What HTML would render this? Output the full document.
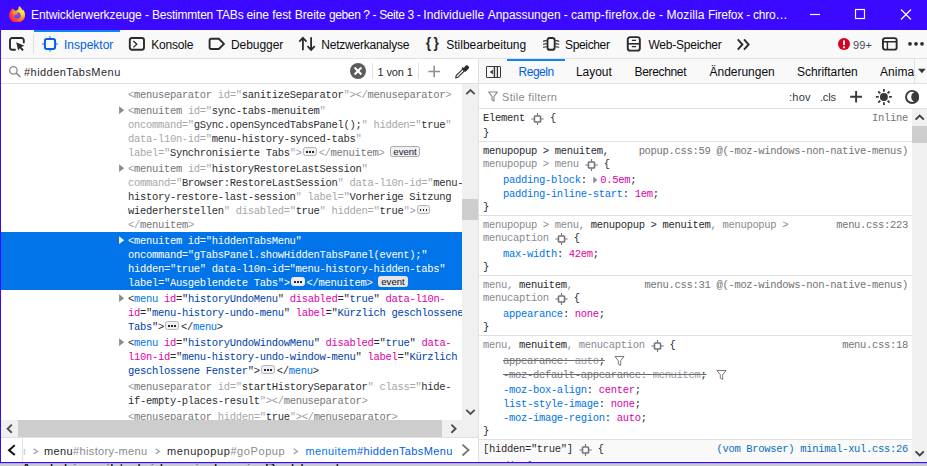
<!DOCTYPE html>
<html lang="de"><head><meta charset="utf-8"><title>Entwicklerwerkzeuge</title>
<style>
html,body{margin:0;padding:0}
body{width:927px;height:466px;overflow:hidden;background:#fff;position:relative}
#r{position:absolute;left:0;top:0;width:927px;height:466px;overflow:hidden}
#r div,#r svg{position:absolute}
#r .t{white-space:pre}
#r .s{font-family:"Liberation Sans", sans-serif}
#r .m{font-family:"Liberation Mono", monospace}
#r .t span{position:static}
#r .t span.bdg{display:inline-block;box-sizing:border-box;border:1px solid #b4b4b8;border-radius:2.500px;background:#f0f0f3;color:#1a1a2e;letter-spacing:0;overflow:hidden}
#r .t span.ell{position:relative;width:13.600px;height:9.500px;margin:0 2.100px 0 1.300px;vertical-align:-1.500px;top:-1.100px}
#r .t span.ell i{position:absolute;top:2.900px;width:1.800px;height:1.800px;background:#2a2a2e;display:block}
#r .t span.ev{font-family:"Liberation Sans", sans-serif;font-size:9.600px;line-height:9px;height:11px;padding:0 2.300px;margin-left:5.500px;vertical-align:-2px;position:relative;top:-1px;background:#f0f0f3;border-color:#a9a9ae}
#r .t span.tg{display:inline-block;position:relative;width:13px;height:12px;vertical-align:-3px;top:1px;margin:0}
#r .tg svg{left:0;top:0}
#r .t span.ex{display:inline-block;position:relative;width:7.500px;height:8px;vertical-align:-1px}
#r .ex svg{left:0;top:0}
#r .st{text-decoration:line-through;text-decoration-color:#6a6a6e}
#r .t span.fi{display:inline-block;position:relative;width:12px;height:12px;vertical-align:-3px;margin-left:9px}
#r .fi svg{left:0;top:0}
</style></head><body><div id="r">
<div style="left:0px;top:0px;width:927px;height:30px;background:#3b09ff;"></div>
<div style="left:0px;top:30px;width:1px;height:433px;background:#3b09ff;"></div>
<div class="t s" style="left:31px;top:8px;line-height:14px;height:14px;font-size:12px;color:#fff;letter-spacing:-0.108px;">Entwicklerwerkzeuge - </div>
<div class="t s" style="left:152px;top:8px;line-height:14px;height:14px;font-size:12px;color:#fff;letter-spacing:-0.234px;">Bestimmten TABs </div>
<div class="t s" style="left:246.5px;top:8px;line-height:14px;height:14px;font-size:12px;color:#fff;letter-spacing:-0.052px;">eine fest Breite </div>
<div class="t s" style="left:329px;top:8px;line-height:14px;height:14px;font-size:12px;color:#fff;letter-spacing:-0.391px;">geben ? - Seite 3 - </div>
<div class="t s" style="left:423.25px;top:8px;line-height:14px;height:14px;font-size:12px;color:#fff;letter-spacing:0.087px;">Individuelle </div>
<div class="t s" style="left:487.75px;top:8px;line-height:14px;height:14px;font-size:12px;color:#fff;letter-spacing:-0.058px;">Anpassungen - </div>
<div class="t s" style="left:571px;top:8px;line-height:14px;height:14px;font-size:12px;color:#fff;letter-spacing:0.118px;">camp-firefox.de - </div>
<div class="t s" style="left:666.5px;top:8px;line-height:14px;height:14px;font-size:12px;color:#fff;letter-spacing:0.102px;">Mozilla </div>
<div class="t s" style="left:708px;top:8px;line-height:14px;height:14px;font-size:12px;color:#fff;letter-spacing:-0.226px;">Firefox - chro…</div>
<svg style="left:805px;top:5px" width="120" height="20" viewBox="0 0 120 20"><g stroke="#fff" stroke-width="1.150" fill="none"><path d="M5 9.5H15"/><rect x="50.5" y="4.5" width="9" height="9"/><path d="M96 4.5L106 14.5M106 4.5L96 14.5"/></g></svg>
<svg style="left:8.900px;top:5.600px" width="16.200" height="16.800" viewBox="0 0 16.200 16.800"><defs><radialGradient id="fx" gradientUnits="userSpaceOnUse" cx="13.500" cy="4.500" r="15"><stop offset="0" stop-color="#fff44f"/><stop offset="0.280" stop-color="#ffd034"/><stop offset="0.550" stop-color="#ff8a1f"/><stop offset="0.800" stop-color="#ff3b3b"/><stop offset="1" stop-color="#f5156c"/></radialGradient><radialGradient id="fp" cx="0.350" cy="0.250" r="0.900"><stop offset="0" stop-color="#b455e0"/><stop offset="0.450" stop-color="#6a4af0"/><stop offset="1" stop-color="#3f55f5"/></radialGradient></defs><path d="M2.600 3.200C1.200 5 0 7 0 9.200C0 13.400 3.600 16.700 8.100 16.700C12.600 16.700 16.100 13.300 16.100 9C16.100 6.400 15 4.400 13.600 3.200C13.800 4 13.800 4.600 13.600 5C13 3 11.800 1.200 10.200 0.100C9.600 1.200 9.200 2.400 9.300 3.600C8.600 3.800 7.800 4.200 7.200 4.800C6.400 4.600 5.600 4.400 5 3.800C4.600 3.400 4.400 3 4.400 2.400C3.800 2.600 3.200 3 2.600 3.200Z" fill="url(#fx)"/><circle cx="8.300" cy="9.500" r="3.300" fill="url(#fp)"/><path d="M3 6.300C4.500 5.300 6.600 5 8.300 6C9.300 6.600 9.300 7.300 8.400 7.500C7 7.500 5.900 8.200 5.300 9.500C4.400 8.500 3.600 7.400 3 6.300Z" fill="#ff9420"/></svg>
<div style="left:1px;top:30px;width:926px;height:28px;background:#f9f9fa;"></div>
<div style="left:1px;top:58px;width:926px;height:1px;background:#e0e0e2;"></div>
<div style="left:34px;top:30px;width:86px;height:2px;background:#0a84ff;"></div>
<div style="left:33px;top:34px;width:1px;height:20px;background:#e0e0e2;"></div>
<svg style="left:8px;top:36px" width="18" height="16" viewBox="0 0 18 16"><path d="M7 13.800H4.200A2.200 2.200 0 0 1 2 11.600V4.200A2.200 2.200 0 0 1 4.200 2H13.600A2.200 2.200 0 0 1 15.800 4.200V6.600" fill="none" stroke="#2a2a2e" stroke-width="1.900" stroke-linecap="round"/><path d="M8.200 6.200L16.400 9.800L13.300 11L15.800 13.800L14.200 15L11.900 12.200L10.200 14.600Z" fill="#2a2a2e"/></svg>
<svg style="left:41px;top:35px" width="18" height="18" viewBox="0 0 18 18"><rect x="3.900" y="3.900" width="10.200" height="10.200" rx="2" fill="none" stroke="#0060df" stroke-width="2"/><path d="M9 1V3M9 15V16.800M0.900 9H3M15 9H16.900" stroke="#0060df" stroke-width="1.500" opacity="0.600"/></svg>
<div class="t s" style="left:64px;top:38px;line-height:14px;height:14px;font-size:12px;color:#0060df;letter-spacing:-0.007px;">Inspektor</div>
<svg style="left:128px;top:36px" width="18" height="16" viewBox="0 0 18 16"><rect x="1.8" y="2" width="14.2" height="11.7" rx="2.200" fill="none" stroke="#2a2a2e" stroke-width="1.900"/><path d="M5.400 5L8.800 8.200L5.400 11.400" fill="none" stroke="#2a2a2e" stroke-width="1.300"/></svg>
<div class="t s" style="left:151.3px;top:38px;line-height:14px;height:14px;font-size:12px;color:#0c0c0d;letter-spacing:-0.211px;">Konsole</div>
<svg style="left:208px;top:36px" width="18" height="16" viewBox="0 0 18 16"><path d="M3 2.8H10.8L16 7.9L10.8 13H3A1.4 1.4 0 0 1 1.6 11.6V4.2A1.4 1.4 0 0 1 3 2.8Z" fill="none" stroke="#2a2a2e" stroke-width="1.900" stroke-linejoin="round"/></svg>
<div class="t s" style="left:231px;top:38px;line-height:14px;height:14px;font-size:12px;color:#0c0c0d;letter-spacing:-0.065px;">Debugger</div>
<svg style="left:298px;top:36px" width="18" height="16" viewBox="0 0 18 16"><path d="M4.900 14.300V2.200M1.300 5.600L4.900 1.900L8.500 5.600M13.100 1.200V13.500M9.500 10.200L13.100 13.900L16.700 10.200" fill="none" stroke="#2a2a2e" stroke-width="1.800"/></svg>
<div class="t s" style="left:321.3px;top:38px;line-height:14px;height:14px;font-size:12px;color:#0c0c0d;letter-spacing:-0.232px;">Netzwerkanalyse</div>
<div class="t s" style="left:425.8px;top:35px;line-height:16px;height:16px;font-size:14px;color:#2a2a2e;letter-spacing:2.147px;font-weight:bold;">{}</div>
<div class="t s" style="left:446.3px;top:38px;line-height:14px;height:14px;font-size:12px;color:#0c0c0d;letter-spacing:-0.011px;">Stilbearbeitung</div>
<svg style="left:542px;top:36px" width="18" height="16" viewBox="0 0 18 16"><rect x="5.500" y="2" width="7.200" height="11.800" rx="2.400" fill="none" stroke="#2a2a2e" stroke-width="1.900"/><path d="M1 5.400L4.600 4.400M1 8.200L4.600 7.600M1 11.200L4.600 10.800M17.200 5.400L13.600 4.400M17.200 8.200L13.600 7.600M17.200 11.200L13.600 10.800" stroke="#2a2a2e" stroke-width="1.100"/></svg>
<div class="t s" style="left:565px;top:38px;line-height:14px;height:14px;font-size:12px;color:#0c0c0d;letter-spacing:-0.347px;">Speicher</div>
<svg style="left:625px;top:36px" width="18" height="16" viewBox="0 0 18 16"><rect x="2.750" y="1.150" width="12.100" height="13.500" rx="2.400" fill="none" stroke="#2a2a2e" stroke-width="1.900"/><path d="M2.800 7.800H14.800" stroke="#2a2a2e" stroke-width="1.600"/><path d="M6.900 4.400H11M6.900 10.700H11" stroke="#2a2a2e" stroke-width="1.300"/></svg>
<div class="t s" style="left:648.4px;top:38px;line-height:14px;height:14px;font-size:12px;color:#0c0c0d;letter-spacing:-0.219px;">Web-Speicher</div>
<svg style="left:736px;top:37px" width="16" height="14" viewBox="0 0 16 14"><path d="M1.800 2.400L6.400 7.500L1.800 12.600M8 2.400L12.600 7.500L8 12.600" fill="none" stroke="#2a2a2e" stroke-width="1.900"/></svg>
<svg style="left:837px;top:38px" width="14" height="14" viewBox="0 0 14 14"><circle cx="7" cy="6" r="6" fill="#d70022"/><rect x="6" y="2.300" width="2" height="4.900" rx="0.900" fill="#fff"/><circle cx="7" cy="9.300" r="1.150" fill="#fff"/></svg>
<div class="t s" style="left:853px;top:39px;line-height:12px;height:12px;font-size:11px;color:#4a4a4f;letter-spacing:0.109px;">99+</div>
<svg style="left:881px;top:36px" width="18" height="16" viewBox="0 0 18 16"><rect x="1.950" y="2.150" width="13.700" height="11.500" rx="2.200" fill="none" stroke="#2a2a2e" stroke-width="1.900"/><path d="M2 5.800H15.600M6.400 5.800V13.600" stroke="#2a2a2e" stroke-width="1.400"/></svg>
<svg style="left:906px;top:40px" width="18" height="8" viewBox="0 0 18 8"><circle cx="4" cy="3.800" r="1.850" fill="#2a2a2e"/><circle cx="10" cy="3.800" r="1.850" fill="#2a2a2e"/><circle cx="16" cy="3.800" r="1.850" fill="#2a2a2e"/></svg>
<div style="left:1px;top:83px;width:478px;height:1px;background:#e0e0e2;"></div>
<svg style="left:8px;top:65px" width="14" height="13" viewBox="0 0 14 13"><circle cx="5.400" cy="5.400" r="3.700" fill="none" stroke="#8a8a8f" stroke-width="1.300"/><path d="M8.200 8.200L12.400 12" stroke="#8a8a8f" stroke-width="1.600"/></svg>
<div class="t s" style="left:24px;top:66px;line-height:12px;height:12px;font-size:11px;color:#2a2a2e;letter-spacing:0.453px;">#hiddenTabsMenu</div>
<svg style="left:350px;top:63px" width="16" height="16" viewBox="0 0 16 16"><circle cx="8" cy="8" r="8" fill="#5c5c5c"/><path d="M4.600 4.600L11.400 11.400M11.400 4.600L4.600 11.400" stroke="#fff" stroke-width="2.100"/></svg>
<div style="left:372px;top:63px;width:1px;height:16px;background:#e0e0e2;"></div>
<div class="t s" style="left:377.5px;top:66px;line-height:12px;height:12px;font-size:11px;color:#2a2a2e;letter-spacing:-0.113px;">1 von 1</div>
<div style="left:418px;top:63px;width:1px;height:16px;background:#e0e0e2;"></div>
<svg style="left:427px;top:65px" width="14" height="13" viewBox="0 0 14 13"><path d="M7.200 0.700V12.300M1.400 6.500H13" stroke="#8f8f94" stroke-width="1.600"/></svg>
<svg style="left:453px;top:63.800px" width="18" height="16" viewBox="0 0 18 16"><path d="M2.800 13.700L3.200 11.600L9.600 5.200L11.300 6.900L4.900 13.300Z" fill="none" stroke="#2a2a2e" stroke-width="1.100"/><path d="M9.200 3.600L12.900 7.300M10.800 5.200L13 2.600A1.200 1.200 0 0 1 14.800 4.400L12.400 6.600" stroke="#2a2a2e" stroke-width="1.700" fill="#2a2a2e"/></svg>
<div style="left:478px;top:59px;width:1px;height:404px;background:#e0e0e2;"></div>
<div class="t m" style="left:128px;top:89px;line-height:12px;height:12px;font-size:10.5px;color:#76767b;letter-spacing:-0.315px;"><span style="color:#9a9a9f">&lt;</span><span style="color:#76767b">menuseparator </span><span style="color:#a6a6aa">id="</span><span style="color:#2e2e33">sanitizeSeparator</span><span style="color:#a6a6aa">"</span><span style="color:#9a9a9f">&gt;&lt;/</span><span style="color:#76767b">menuseparator</span><span style="color:#9a9a9f">&gt;</span></div>
<svg style="left:118px;top:105.5px" width="8" height="10" viewBox="0 0 8 10"><path d="M1.100 0.300L6.100 4.200L1.100 8.100Z" fill="#8a8a8f"/></svg>
<div class="t m" style="left:128px;top:105px;line-height:12px;height:12px;font-size:10.5px;color:#76767b;letter-spacing:-0.315px;"><span style="color:#9a9a9f">&lt;</span><span style="color:#76767b">menuitem </span><span style="color:#a6a6aa">id="</span><span style="color:#2e2e33">sync-tabs-menuitem</span><span style="color:#a6a6aa">"</span></div>
<div class="t m" style="left:128px;top:119px;line-height:12px;height:12px;font-size:10.5px;color:#76767b;letter-spacing:-0.315px;"><span style="color:#a6a6aa">oncommand="</span><span style="color:#2e2e33">gSync.openSyncedTabsPanel();</span><span style="color:#a6a6aa">" hidden="</span><span style="color:#2e2e33">true</span><span style="color:#a6a6aa">"</span></div>
<div class="t m" style="left:128px;top:133px;line-height:12px;height:12px;font-size:10.5px;color:#76767b;letter-spacing:-0.315px;"><span style="color:#a6a6aa">data-l10n-id="</span><span style="color:#2e2e33">menu-history-synced-tabs</span><span style="color:#a6a6aa">"</span></div>
<div class="t m" style="left:128px;top:147px;line-height:12px;height:12px;font-size:10.5px;color:#76767b;letter-spacing:-0.315px;"><span style="color:#a6a6aa">label="</span><span style="color:#2e2e33">Synchronisierte Tabs</span><span style="color:#a6a6aa">"</span><span style="color:#9a9a9f">&gt;</span><span class="bdg ell"><i style="left:1.900px"></i><i style="left:4.850px"></i><i style="left:7.800px"></i></span><span style="color:#9a9a9f">&lt;/</span><span style="color:#76767b">menuitem</span><span style="color:#9a9a9f">&gt;</span><span class="bdg ev">event</span></div>
<svg style="left:118px;top:163.5px" width="8" height="10" viewBox="0 0 8 10"><path d="M1.100 0.300L6.100 4.200L1.100 8.100Z" fill="#8a8a8f"/></svg>
<div class="t m" style="left:128px;top:163px;line-height:12px;height:12px;font-size:10.5px;color:#76767b;letter-spacing:-0.315px;"><span style="color:#9a9a9f">&lt;</span><span style="color:#76767b">menuitem </span><span style="color:#a6a6aa">id="</span><span style="color:#2e2e33">historyRestoreLastSession</span><span style="color:#a6a6aa">"</span></div>
<div class="t m" style="left:128px;top:177px;line-height:12px;height:12px;font-size:10.5px;color:#76767b;letter-spacing:-0.315px;"><span style="color:#a6a6aa">command="</span><span style="color:#2e2e33">Browser:RestoreLastSession</span><span style="color:#a6a6aa">" data-l10n-id="</span><span style="color:#2e2e33">menu-</span></div>
<div class="t m" style="left:128px;top:191px;line-height:12px;height:12px;font-size:10.5px;color:#76767b;letter-spacing:-0.315px;"><span style="color:#2e2e33">history-restore-last-session</span><span style="color:#a6a6aa">" label="</span><span style="color:#2e2e33">Vorherige Sitzung</span></div>
<div class="t m" style="left:128px;top:205px;line-height:12px;height:12px;font-size:10.5px;color:#76767b;letter-spacing:-0.315px;"><span style="color:#2e2e33">wiederherstellen</span><span style="color:#a6a6aa">" disabled="</span><span style="color:#2e2e33">true</span><span style="color:#a6a6aa">" hidden="</span><span style="color:#2e2e33">true</span><span style="color:#a6a6aa">"</span><span style="color:#9a9a9f">&gt;</span><span class="bdg ell"><i style="left:1.900px"></i><i style="left:4.850px"></i><i style="left:7.800px"></i></span></div>
<div class="t m" style="left:128px;top:219px;line-height:12px;height:12px;font-size:10.5px;color:#76767b;letter-spacing:-0.315px;"><span style="color:#9a9a9f">&lt;/</span><span style="color:#76767b">menuitem</span><span style="color:#9a9a9f">&gt;</span></div>
<div style="left:1px;top:232px;width:461px;height:58px;background:#0074e8;"></div>
<svg style="left:118px;top:235.5px" width="8" height="10" viewBox="0 0 8 10"><path d="M1.100 0.300L6.100 4.200L1.100 8.100Z" fill="#fff"/></svg>
<div class="t m" style="left:128px;top:235px;line-height:12px;height:12px;font-size:10.5px;color:#fff;letter-spacing:-0.315px;"><span style="color:#fff">&lt;menuitem id="hiddenTabsMenu"</span></div>
<div class="t m" style="left:128px;top:249px;line-height:12px;height:12px;font-size:10.5px;color:#fff;letter-spacing:-0.315px;"><span style="color:#fff">oncommand="gTabsPanel.showHiddenTabsPanel(event);"</span></div>
<div class="t m" style="left:128px;top:263px;line-height:12px;height:12px;font-size:10.5px;color:#fff;letter-spacing:-0.315px;"><span style="color:#fff">hidden="true" data-l10n-id="menu-history-hidden-tabs"</span></div>
<div class="t m" style="left:128px;top:277px;line-height:12px;height:12px;font-size:10.5px;color:#fff;letter-spacing:-0.315px;"><span style="color:#fff">label="Ausgeblendete Tabs"&gt;</span><span class="bdg ell" style="background:#ededf0;border-color:#ededf0"><i style="left:1.900px"></i><i style="left:4.850px"></i><i style="left:7.800px"></i></span><span style="color:#fff">&lt;/menuitem&gt;</span><span class="bdg ev" style="background:#e6e6ea;border-color:#e6e6ea;color:#0c0c0d">event</span></div>
<svg style="left:118px;top:293.5px" width="8" height="10" viewBox="0 0 8 10"><path d="M1.100 0.300L6.100 4.200L1.100 8.100Z" fill="#8a8a8f"/></svg>
<div class="t m" style="left:128px;top:293px;line-height:12px;height:12px;font-size:10.5px;color:#76767b;letter-spacing:-0.315px;"><span style="color:#2a2a2e">&lt;</span><span style="color:#0074e8">menu </span><span style="color:#dd00a9">id</span><span style="color:#2a2a2e">="</span><span style="color:#003eaa">historyUndoMenu</span><span style="color:#2a2a2e">" </span><span style="color:#dd00a9">disabled</span><span style="color:#2a2a2e">="</span><span style="color:#003eaa">true</span><span style="color:#2a2a2e">" </span><span style="color:#dd00a9">data-l10n-</span></div>
<div class="t m" style="left:128px;top:307px;line-height:12px;height:12px;font-size:10.5px;color:#76767b;letter-spacing:-0.315px;"><span style="color:#dd00a9">id</span><span style="color:#2a2a2e">="</span><span style="color:#003eaa">menu-history-undo-menu</span><span style="color:#2a2a2e">" </span><span style="color:#dd00a9">label</span><span style="color:#2a2a2e">="</span><span style="color:#003eaa">Kürzlich geschlossene</span></div>
<div class="t m" style="left:128px;top:321px;line-height:12px;height:12px;font-size:10.5px;color:#76767b;letter-spacing:-0.315px;"><span style="color:#003eaa">Tabs</span><span style="color:#2a2a2e">"&gt;</span><span class="bdg ell"><i style="left:1.900px"></i><i style="left:4.850px"></i><i style="left:7.800px"></i></span><span style="color:#2a2a2e">&lt;/</span><span style="color:#0074e8">menu</span><span style="color:#2a2a2e">&gt;</span></div>
<svg style="left:118px;top:337.5px" width="8" height="10" viewBox="0 0 8 10"><path d="M1.100 0.300L6.100 4.200L1.100 8.100Z" fill="#8a8a8f"/></svg>
<div class="t m" style="left:128px;top:337px;line-height:12px;height:12px;font-size:10.5px;color:#76767b;letter-spacing:-0.315px;"><span style="color:#2a2a2e">&lt;</span><span style="color:#0074e8">menu </span><span style="color:#dd00a9">id</span><span style="color:#2a2a2e">="</span><span style="color:#003eaa">historyUndoWindowMenu</span><span style="color:#2a2a2e">" </span><span style="color:#dd00a9">disabled</span><span style="color:#2a2a2e">="</span><span style="color:#003eaa">true</span><span style="color:#2a2a2e">" </span><span style="color:#dd00a9">data-</span></div>
<div class="t m" style="left:128px;top:351px;line-height:12px;height:12px;font-size:10.5px;color:#76767b;letter-spacing:-0.315px;"><span style="color:#dd00a9">l10n-id</span><span style="color:#2a2a2e">="</span><span style="color:#003eaa">menu-history-undo-window-menu</span><span style="color:#2a2a2e">" </span><span style="color:#dd00a9">label</span><span style="color:#2a2a2e">="</span><span style="color:#003eaa">Kürzlich</span></div>
<div class="t m" style="left:128px;top:365px;line-height:12px;height:12px;font-size:10.5px;color:#76767b;letter-spacing:-0.315px;"><span style="color:#003eaa">geschlossene Fenster</span><span style="color:#2a2a2e">"&gt;</span><span class="bdg ell"><i style="left:1.900px"></i><i style="left:4.850px"></i><i style="left:7.800px"></i></span><span style="color:#2a2a2e">&lt;/</span><span style="color:#0074e8">menu</span><span style="color:#2a2a2e">&gt;</span></div>
<div class="t m" style="left:128px;top:381px;line-height:12px;height:12px;font-size:10.5px;color:#76767b;letter-spacing:-0.315px;"><span style="color:#9a9a9f">&lt;</span><span style="color:#76767b">menuseparator </span><span style="color:#a6a6aa">id="</span><span style="color:#2e2e33">startHistorySeparator</span><span style="color:#a6a6aa">" class="</span><span style="color:#2e2e33">hide-</span></div>
<div class="t m" style="left:128px;top:395px;line-height:12px;height:12px;font-size:10.5px;color:#76767b;letter-spacing:-0.315px;"><span style="color:#2e2e33">if-empty-places-result</span><span style="color:#a6a6aa">"</span><span style="color:#9a9a9f">&gt;&lt;/</span><span style="color:#76767b">menuseparator</span><span style="color:#9a9a9f">&gt;</span></div>
<div class="t m" style="left:128px;top:411px;line-height:12px;height:12px;font-size:10.5px;color:#76767b;letter-spacing:-0.315px;"><span style="color:#9a9a9f">&lt;</span><span style="color:#76767b">menuseparator </span><span style="color:#a6a6aa">hidden="</span><span style="color:#2e2e33">true</span><span style="color:#a6a6aa">"</span><span style="color:#9a9a9f">&gt;&lt;/</span><span style="color:#76767b">menuseparator</span><span style="color:#9a9a9f">&gt;</span></div>
<div style="left:462px;top:84px;width:16px;height:353px;background:#f0f0f0;"></div>
<div style="left:462px;top:199px;width:16px;height:20.5px;background:#cdcdcd;"></div>
<svg style="left:462px;top:84px" width="16" height="17" viewBox="0 0 16 17"><path d="M4.300 10.200L8.500 6L12.700 10.200" fill="none" stroke="#505050" stroke-width="1.900"/></svg>
<svg style="left:462px;top:403px" width="16" height="17" viewBox="0 0 16 17"><path d="M4.300 6.800L8.500 11L12.700 6.800" fill="none" stroke="#505050" stroke-width="1.900"/></svg>
<div style="left:1px;top:420px;width:461px;height:17px;background:#f0f0f0;"></div>
<div style="left:18px;top:420px;width:424px;height:17px;background:#cdcdcd;"></div>
<svg style="left:1px;top:420px" width="17" height="17" viewBox="0 0 17 17"><path d="M10.800 4.600L6.600 8.700L10.800 12.800" fill="none" stroke="#505050" stroke-width="1.900"/></svg>
<svg style="left:444px;top:420px" width="17" height="17" viewBox="0 0 17 17"><path d="M7.400 4.600L11.600 8.700L7.400 12.800" fill="none" stroke="#505050" stroke-width="1.900"/></svg>
<div style="left:1px;top:437px;width:477px;height:25px;background:#fff;"></div>
<div style="left:1px;top:437px;width:477px;height:1px;background:#e0e0e2;"></div>
<svg style="left:6px;top:443px" width="12" height="14" viewBox="0 0 12 14"><path d="M8.800 2.300L3 7.200L8.800 12.100" fill="none" stroke="#0c0c0d" stroke-width="1.900"/></svg>
<div style="left:22px;top:438px;width:1px;height:24px;background:#e0e0e2;"></div>
<div class="t s" style="left:23px;top:445px;line-height:12px;height:12px;font-size:11px;color:#b4c8ec;clip-path:inset(0 1px 0 0);">r</div>
<svg style="left:32.5px;top:447.500px" width="6" height="7" viewBox="0 0 6 7"><path d="M0.700 0.800L4.400 3.400L0.700 6" fill="none" stroke="#a2a2bc" stroke-width="1.300"/></svg>
<div class="t s" style="left:44px;top:445px;line-height:12px;height:12px;font-size:11px;color:#2a2a2e;letter-spacing:0.369px;">menu<span style="color:#8a8a8f">#history-menu</span></div>
<svg style="left:154.5px;top:447.500px" width="6" height="7" viewBox="0 0 6 7"><path d="M0.700 0.800L4.400 3.400L0.700 6" fill="none" stroke="#a2a2bc" stroke-width="1.300"/></svg>
<div class="t s" style="left:167px;top:445px;line-height:12px;height:12px;font-size:11px;color:#2a2a2e;letter-spacing:0.589px;">menupopup<span style="color:#8a8a8f">#goPopup</span></div>
<svg style="left:292.5px;top:447.500px" width="6" height="7" viewBox="0 0 6 7"><path d="M0.700 0.800L4.400 3.400L0.700 6" fill="none" stroke="#a2a2bc" stroke-width="1.300"/></svg>
<div class="t s" style="left:305.5px;top:445px;line-height:12px;height:12px;font-size:11px;color:#0074e8;letter-spacing:0.396px;">menuitem<span style="color:#0060df">#hiddenTabsMenu</span></div>
<svg style="left:459px;top:443px" width="12" height="14" viewBox="0 0 12 14"><path d="M3.500 1.700L9.500 7.100L3.500 12.500" fill="none" stroke="#737373" stroke-width="1.800"/></svg>
<div style="left:479px;top:59px;width:448px;height:24px;background:#f9f9fa;"></div>
<div style="left:479px;top:83px;width:448px;height:1px;background:#e0e0e2;"></div>
<div style="left:507px;top:59px;width:57.5px;height:2px;background:#0a84ff;"></div>
<svg style="left:485px;top:65px" width="18" height="14" viewBox="0 0 18 14"><rect x="1.500" y="1.500" width="14" height="11" rx="0.500" fill="none" stroke="#38383d" stroke-width="1"/><path d="M9.400 1.500V12.500" stroke="#38383d" stroke-width="1.500"/><path d="M12.400 1.500V12.500" stroke="#38383d" stroke-width="1.300"/><path d="M7.900 4.800L4.700 7L7.900 9.200Z" fill="#38383d"/></svg>
<div class="t s" style="left:518.5px;top:65px;line-height:14px;height:14px;font-size:12px;color:#0060df;letter-spacing:-0.472px;">Regeln</div>
<div class="t s" style="left:576px;top:65px;line-height:14px;height:14px;font-size:12px;color:#0c0c0d;letter-spacing:-0.055px;">Layout</div>
<div class="t s" style="left:634.5px;top:65px;line-height:14px;height:14px;font-size:12px;color:#0c0c0d;letter-spacing:-0.334px;">Berechnet</div>
<div class="t s" style="left:709.5px;top:65px;line-height:14px;height:14px;font-size:12px;color:#0c0c0d;letter-spacing:-0.019px;">Änderungen</div>
<div class="t s" style="left:797px;top:65px;line-height:14px;height:14px;font-size:12px;color:#0c0c0d;letter-spacing:-0.055px;">Schriftarten</div>
<div class="t s" style="left:880px;top:65px;line-height:14px;height:14px;font-size:12px;color:#0c0c0d;letter-spacing:0.057px;">Anima</div>
<div style="left:914px;top:59px;width:13px;height:24px;background:#f9f9fa;"></div>
<div style="left:914px;top:59px;width:1px;height:24px;background:#e0e0e2;"></div>
<svg style="left:917px;top:68px" width="10" height="6" viewBox="0 0 10 6"><path d="M1 0.800H8.800L4.900 5.200Z" fill="#38383d"/></svg>
<div style="left:479px;top:108px;width:448px;height:1px;background:#e0e0e2;"></div>
<svg style="left:487px;top:90px" width="12" height="13" viewBox="0 0 12 13"><path d="M1.600 2H10.400L7 6.400V11L5 9.800V6.400Z" fill="none" stroke="#8a8a8f" stroke-width="1.150" stroke-linejoin="round"/></svg>
<div class="t s" style="left:502px;top:91px;line-height:12px;height:12px;font-size:11px;color:#8a8a8f;letter-spacing:0.303px;">Stile filtern</div>
<div class="t s" style="left:789px;top:91px;line-height:12px;height:12px;font-size:11px;color:#38383d;letter-spacing:0.226px;">:hov</div>
<div class="t s" style="left:820px;top:91px;line-height:12px;height:12px;font-size:11px;color:#38383d;letter-spacing:-0.200px;">.cls</div>
<svg style="left:850px;top:90px" width="13" height="13" viewBox="0 0 13 13"><path d="M6.100 1V12.600M0.200 6.800H12" stroke="#38383d" stroke-width="1.900"/></svg>
<svg style="left:875px;top:88px" width="18" height="18" viewBox="0 0 18 18"><circle cx="8.9" cy="8.95" r="3.950" fill="#38383d"/><path d="M14.10 8.95L16.90 8.95M12.58 12.63L14.56 14.61M8.90 14.15L8.90 16.95M5.22 12.63L3.24 14.61M3.70 8.95L0.90 8.95M5.22 5.27L3.24 3.29M8.90 3.75L8.90 0.95M12.58 5.27L14.56 3.29" stroke="#38383d" stroke-width="1.800"/></svg>
<svg style="left:904px;top:89px" width="16" height="16" viewBox="0 0 16 16"><defs><clipPath id="cc"><circle cx="8.100" cy="7.950" r="6.900"/></clipPath></defs><circle cx="8.100" cy="7.950" r="6.050" fill="none" stroke="#38383d" stroke-width="1.900"/><circle cx="12.700" cy="7.950" r="5.500" fill="#38383d" clip-path="url(#cc)"/></svg>
<div style="left:912px;top:109px;width:15px;height:354px;background:#f0f0f0;"></div>
<div style="left:912px;top:126px;width:15px;height:16.5px;background:#cdcdcd;"></div>
<svg style="left:912px;top:109px" width="15" height="17" viewBox="0 0 15 17"><path d="M3.600 10.700L7.700 6.600L11.800 10.700" fill="none" stroke="#404040" stroke-width="1.900"/></svg>
<svg style="left:912px;top:445px" width="15" height="17" viewBox="0 0 15 17"><path d="M3.600 6.400L7.700 10.500L11.800 6.400" fill="none" stroke="#404040" stroke-width="1.900"/></svg>
<div class="t m" style="left:483px;top:112px;line-height:12px;height:12px;font-size:10.5px;color:#2a2a2e;letter-spacing:-0.315px;"><span style="color:#2a2a2e">Element </span><span class="tg"><svg width="13" height="12" viewBox="0 0 13 12"><rect x="3.450" y="2.950" width="6.100" height="6.100" rx="0.800" fill="none" stroke="#737378" stroke-width="1.600"/><path d="M6.500 0V2.400M6.500 9.600V12M0.300 6H2.800M10.200 6H12.700" stroke="#737378" stroke-width="1.150"/></svg></span><span style="color:#2a2a2e"> {</span></div>
<div class="t m" style="left:479px;top:112px;line-height:12px;height:12px;font-size:10.5px;color:#737373;letter-spacing:-0.315px;width:429px;text-align:right;">Inline</div>
<div class="t m" style="left:483px;top:127px;line-height:12px;height:12px;font-size:10.5px;color:#2a2a2e;letter-spacing:-0.315px;"><span style="color:#2a2a2e">}</span></div>
<div style="left:479px;top:141px;width:433px;height:1px;background:#e0e0e2;"></div>
<div class="t m" style="left:483px;top:145px;line-height:12px;height:12px;font-size:10.5px;color:#2a2a2e;letter-spacing:-0.315px;"><span style="color:#2a2a2e">menupopup &gt; menuitem,</span></div>
<div class="t m" style="left:479px;top:145px;line-height:12px;height:12px;font-size:10.5px;color:#737373;letter-spacing:-0.315px;width:429px;text-align:right;">popup.css:59 @(-moz-windows-non-native-menus)</div>
<div class="t m" style="left:483px;top:158px;line-height:12px;height:12px;font-size:10.5px;color:#2a2a2e;letter-spacing:-0.315px;"><span style="color:#8a8a8f">menupopup &gt; menu </span><span class="tg"><svg width="13" height="12" viewBox="0 0 13 12"><rect x="3.450" y="2.950" width="6.100" height="6.100" rx="0.800" fill="none" stroke="#737378" stroke-width="1.600"/><path d="M6.500 0V2.400M6.500 9.600V12M0.300 6H2.800M10.200 6H12.700" stroke="#737378" stroke-width="1.150"/></svg></span><span style="color:#2a2a2e"> {</span></div>
<div class="t m" style="left:503px;top:174px;line-height:12px;height:12px;font-size:10.5px;color:#2a2a2e;letter-spacing:-0.315px;"><span style="color:#0074e8">padding-block</span><span style="color:#2a2a2e">: </span><span class="ex"><svg width="5" height="8" viewBox="0 0 5 8"><path d="M0.300 0.500L4.300 4L0.300 7.500Z" fill="#8a8a8f"/></svg></span><span style="color:#dd00a9">0.5em</span><span style="color:#2a2a2e">;</span></div>
<div class="t m" style="left:503px;top:188px;line-height:12px;height:12px;font-size:10.5px;color:#2a2a2e;letter-spacing:-0.315px;"><span style="color:#0074e8">padding-inline-start</span><span style="color:#2a2a2e">: </span><span style="color:#dd00a9">1em</span><span style="color:#2a2a2e">;</span></div>
<div class="t m" style="left:483px;top:201px;line-height:12px;height:12px;font-size:10.5px;color:#2a2a2e;letter-spacing:-0.315px;"><span style="color:#2a2a2e">}</span></div>
<div style="left:479px;top:215px;width:433px;height:1px;background:#e0e0e2;"></div>
<div class="t m" style="left:483px;top:219px;line-height:12px;height:12px;font-size:10.5px;color:#2a2a2e;letter-spacing:-0.315px;"><span style="color:#8a8a8f">menupopup &gt; menu, </span><span style="color:#2a2a2e">menupopup &gt; menuitem</span><span style="color:#8a8a8f">, menupopup &gt;</span></div>
<div class="t m" style="left:479px;top:219px;line-height:12px;height:12px;font-size:10.5px;color:#737373;letter-spacing:-0.315px;width:429px;text-align:right;">menu.css:223</div>
<div class="t m" style="left:483px;top:232px;line-height:12px;height:12px;font-size:10.5px;color:#2a2a2e;letter-spacing:-0.315px;"><span style="color:#8a8a8f">menucaption </span><span class="tg"><svg width="13" height="12" viewBox="0 0 13 12"><rect x="3.450" y="2.950" width="6.100" height="6.100" rx="0.800" fill="none" stroke="#737378" stroke-width="1.600"/><path d="M6.500 0V2.400M6.500 9.600V12M0.300 6H2.800M10.200 6H12.700" stroke="#737378" stroke-width="1.150"/></svg></span><span style="color:#2a2a2e"> {</span></div>
<div class="t m" style="left:503px;top:248px;line-height:12px;height:12px;font-size:10.5px;color:#2a2a2e;letter-spacing:-0.315px;"><span style="color:#0074e8">max-width</span><span style="color:#2a2a2e">: </span><span style="color:#dd00a9">42em</span><span style="color:#2a2a2e">;</span></div>
<div class="t m" style="left:483px;top:261px;line-height:12px;height:12px;font-size:10.5px;color:#2a2a2e;letter-spacing:-0.315px;"><span style="color:#2a2a2e">}</span></div>
<div style="left:479px;top:275px;width:433px;height:1px;background:#e0e0e2;"></div>
<div class="t m" style="left:483px;top:279px;line-height:12px;height:12px;font-size:10.5px;color:#2a2a2e;letter-spacing:-0.315px;"><span style="color:#8a8a8f">menu, </span><span style="color:#2a2a2e">menuitem</span><span style="color:#8a8a8f">,</span></div>
<div class="t m" style="left:479px;top:279px;line-height:12px;height:12px;font-size:10.5px;color:#737373;letter-spacing:-0.315px;width:429px;text-align:right;">menu.css:31 @(-moz-windows-non-native-menus)</div>
<div class="t m" style="left:483px;top:292px;line-height:12px;height:12px;font-size:10.5px;color:#2a2a2e;letter-spacing:-0.315px;"><span style="color:#8a8a8f">menucaption </span><span class="tg"><svg width="13" height="12" viewBox="0 0 13 12"><rect x="3.450" y="2.950" width="6.100" height="6.100" rx="0.800" fill="none" stroke="#737378" stroke-width="1.600"/><path d="M6.500 0V2.400M6.500 9.600V12M0.300 6H2.800M10.200 6H12.700" stroke="#737378" stroke-width="1.150"/></svg></span><span style="color:#2a2a2e"> {</span></div>
<div class="t m" style="left:503px;top:308px;line-height:12px;height:12px;font-size:10.5px;color:#2a2a2e;letter-spacing:-0.315px;"><span style="color:#0074e8">appearance</span><span style="color:#2a2a2e">: </span><span style="color:#dd00a9">none</span><span style="color:#2a2a2e">;</span></div>
<div class="t m" style="left:483px;top:321px;line-height:12px;height:12px;font-size:10.5px;color:#2a2a2e;letter-spacing:-0.315px;"><span style="color:#2a2a2e">}</span></div>
<div style="left:479px;top:335px;width:433px;height:1px;background:#e0e0e2;"></div>
<div class="t m" style="left:483px;top:339px;line-height:12px;height:12px;font-size:10.5px;color:#2a2a2e;letter-spacing:-0.315px;"><span style="color:#8a8a8f">menu, </span><span style="color:#2a2a2e">menuitem</span><span style="color:#8a8a8f">, menucaption </span><span class="tg"><svg width="13" height="12" viewBox="0 0 13 12"><rect x="3.450" y="2.950" width="6.100" height="6.100" rx="0.800" fill="none" stroke="#737378" stroke-width="1.600"/><path d="M6.500 0V2.400M6.500 9.600V12M0.300 6H2.800M10.200 6H12.700" stroke="#737378" stroke-width="1.150"/></svg></span><span style="color:#2a2a2e"> {</span></div>
<div class="t m" style="left:479px;top:339px;line-height:12px;height:12px;font-size:10.5px;color:#737373;letter-spacing:-0.315px;width:429px;text-align:right;">menu.css:18</div>
<div class="t m" style="left:503px;top:355px;line-height:12px;height:12px;font-size:10.5px;color:#737373;letter-spacing:-0.315px;"><span class="st"><span style="color:#7c7c81">appearance: </span><span style="color:#9c9ca1">auto</span><span style="color:#2a2a2e">;</span></span><span class="fi"><svg width="12" height="12" viewBox="0 0 12 12"><path d="M1 1.500H10L6.700 5.700V10.500L4.300 9.200V5.700Z" fill="none" stroke="#6a6a6e" stroke-width="0.900"/></svg></span></div>
<div class="t m" style="left:503px;top:369px;line-height:12px;height:12px;font-size:10.5px;color:#737373;letter-spacing:-0.315px;"><span class="st"><span style="color:#7c7c81">-moz-default-appearance: </span><span style="color:#9c9ca1">menuitem</span><span style="color:#2a2a2e">;</span></span><span class="fi"><svg width="12" height="12" viewBox="0 0 12 12"><path d="M1 1.500H10L6.700 5.700V10.500L4.300 9.200V5.700Z" fill="none" stroke="#6a6a6e" stroke-width="0.900"/></svg></span></div>
<div class="t m" style="left:503px;top:384px;line-height:12px;height:12px;font-size:10.5px;color:#2a2a2e;letter-spacing:-0.315px;"><span style="color:#0074e8">-moz-box-align</span><span style="color:#2a2a2e">: </span><span style="color:#dd00a9">center</span><span style="color:#2a2a2e">;</span></div>
<div class="t m" style="left:503px;top:398px;line-height:12px;height:12px;font-size:10.5px;color:#2a2a2e;letter-spacing:-0.315px;"><span style="color:#0074e8">list-style-image</span><span style="color:#2a2a2e">: </span><span style="color:#dd00a9">none</span><span style="color:#2a2a2e">;</span></div>
<div class="t m" style="left:503px;top:412px;line-height:12px;height:12px;font-size:10.5px;color:#2a2a2e;letter-spacing:-0.315px;"><span style="color:#0074e8">-moz-image-region</span><span style="color:#2a2a2e">: </span><span style="color:#dd00a9">auto</span><span style="color:#2a2a2e">;</span></div>
<div class="t m" style="left:483px;top:425px;line-height:12px;height:12px;font-size:10.5px;color:#2a2a2e;letter-spacing:-0.315px;"><span style="color:#2a2a2e">}</span></div>
<div style="left:479px;top:439px;width:433px;height:1px;background:#e0e0e2;"></div>
<div style="left:479px;top:440px;width:433px;height:23px;background:#f9f9fa;"></div>
<div class="t m" style="left:483px;top:443px;line-height:12px;height:12px;font-size:10.5px;color:#2a2a2e;letter-spacing:-0.315px;"><span style="color:#2a2a2e">[hidden="true"] </span><span class="tg"><svg width="13" height="12" viewBox="0 0 13 12"><rect x="3.450" y="2.950" width="6.100" height="6.100" rx="0.800" fill="none" stroke="#737378" stroke-width="1.600"/><path d="M6.500 0V2.400M6.500 9.600V12M0.300 6H2.800M10.200 6H12.700" stroke="#737378" stroke-width="1.150"/></svg></span><span style="color:#2a2a2e"> {</span></div>
<div class="t m" style="left:479px;top:443px;line-height:12px;height:12px;font-size:10.5px;color:#0b72b5;letter-spacing:-0.315px;width:429px;text-align:right;">(vom Browser) minimal-xul.css:26</div>
<div class="t m" style="left:503px;top:460px;line-height:12px;height:12px;font-size:10.5px;color:#2a2a2e;letter-spacing:-0.315px;"><span style="color:#0074e8">display</span><span style="color:#2a2a2e">: </span><span style="color:#dd00a9">none</span><span style="color:#2a2a2e">;</span></div>
<div style="left:0px;top:463px;width:927px;height:3px;background:#cacaca;"></div>
<div class="t s" style="left:21px;top:461px;line-height:17px;height:17px;font-size:16px;color:#111;letter-spacing:0.371px;">Auch hier gibts leider wieder ein Problemchen.</div>
<div style="left:0px;top:462px;width:927px;height:1px;background:#3b09ff;"></div>
<div style="left:0px;top:463px;width:927px;height:1px;background:#b4aade;"></div>
</div></body></html>
